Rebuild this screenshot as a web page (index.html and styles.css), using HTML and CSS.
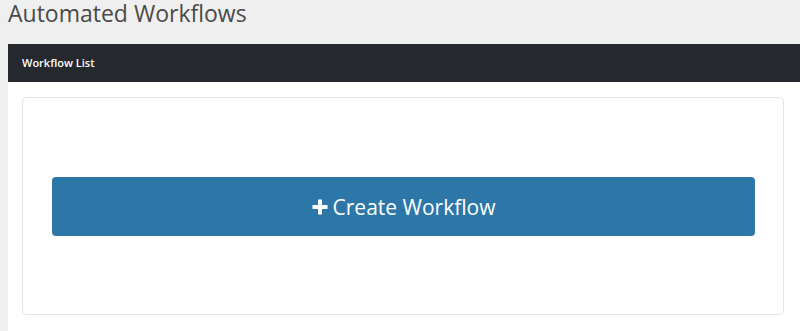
FILE: index.html
```html
<!DOCTYPE html>
<html lang="en">
<head>
  <meta charset="UTF-8">
  <title>Automated Workflows</title>
  <link rel="stylesheet" href="styles.css">
</head>
<body>

<h1 class="page-title">Automated Workflows</h1>

<section class="panel">
  <div class="panel-heading">Workflow List</div>
  <div class="panel-body">
    <div class="empty-box">
      <button type="button" class="btn btn-create">
        <svg class="icon-plus" viewBox="0 0 16 16" width="16" height="16" aria-hidden="true">
          <path d="M6 0.5h4v5.5h5.5v4h-5.5v5.5h-4v-5.5h-5.5v-4h5.5z" fill="#fff"/>
        </svg>
        Create Workflow
      </button>
    </div>
  </div>
</section>

</body>
</html>
```

FILE: styles.css
```css
* {
  box-sizing: border-box;
  margin: 0;
  padding: 0;
}

body {
  background-color: #efefef;
  font-family: 'Open Sans', sans-serif;
  padding-left: 8px;
  overflow: hidden;
}

.page-title {
  font-size: 23px;
  font-weight: 400;
  color: #4a4a4a;
  height: 44px;
  line-height: 26px;
}

.panel {
  background-color: #fff;
}

.panel-heading {
  background-color: #25282d;
  color: #fff;
  font-size: 11px;
  font-weight: 600;
  height: 38px;
  line-height: 38px;
  padding-left: 14px;
}

.panel-body {
  padding: 15px 16px 30px 14px;
}

.empty-box {
  border: 1px solid #e2e2e2;
  border-radius: 5px;
  padding: 79px 28px 78px 29px;
}

.btn {
  border: none;
  cursor: pointer;
  font-family: inherit;
}

.btn-create {
  width: 100%;
  height: 59px;
  background-color: #2c77a8;
  color: #fff;
  font-size: 21px;
  border-radius: 4px;
  display: flex;
  align-items: center;
  justify-content: center;
  gap: 5px;
}

.icon-plus {
  display: block;
}
```
